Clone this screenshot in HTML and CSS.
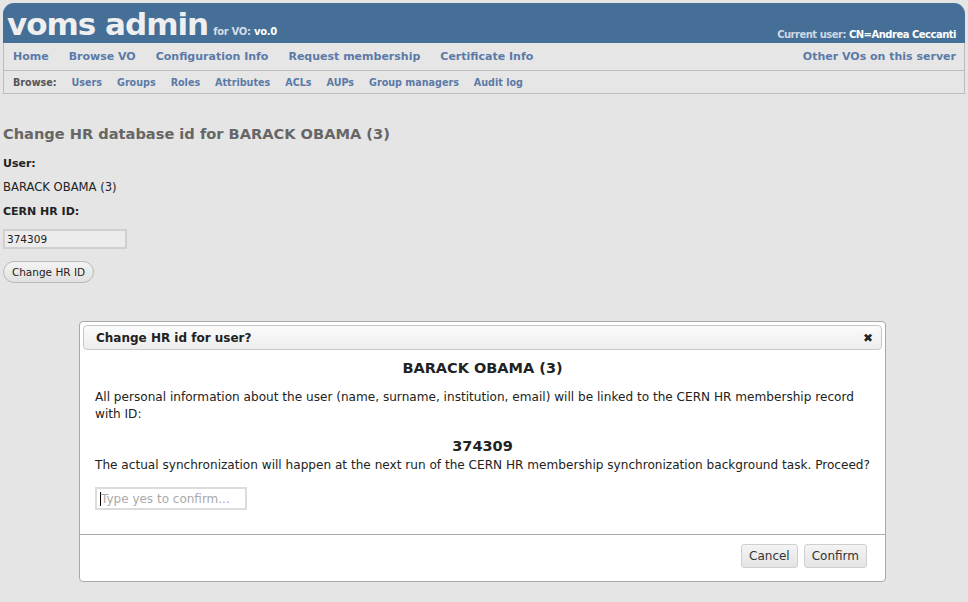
FILE: index.html
```html
<!DOCTYPE html>
<html>
<head>
<meta charset="utf-8">
<link rel="stylesheet" href="styles.css">
</head>
<body>
<div class="header">
  <div class="brand"><span class="logo">voms admin</span><span class="vo">for VO: <b>vo.0</b></span></div>
  <div class="cuser">Current user: <b>CN=Andrea Ceccanti</b></div>
</div>
<div class="nav">
  <div class="navmain">
    <div class="navleft">
      <a>Home</a><a>Browse VO</a><a>Configuration Info</a><a>Request membership</a><a>Certificate Info</a>
    </div>
    <a>Other VOs on this server</a>
  </div>
  <div class="navsub">
    <span class="lbl">Browse:</span><a>Users</a><a>Groups</a><a>Roles</a><a>Attributes</a><a>ACLs</a><a>AUPs</a><a>Group managers</a><a>Audit log</a>
  </div>
</div>
<div class="content">
  <h2>Change HR database id for BARACK OBAMA (3)</h2>
  <div class="label">User:</div>
  <div class="value">BARACK OBAMA (3)</div>
  <div class="label">CERN HR ID:</div>
  <div class="field"><input class="hrinput" type="text" value="374309"></div>
  <button class="pill">Change HR ID</button>
</div>
<div class="dialog">
  <div class="dtitle"><span>Change HR id for user?</span><span class="close">&#x2716;</span></div>
  <div class="dbody">
    <div class="dname">BARACK OBAMA (3)</div>
    <p class="dp">All personal information about the user (name, surname, institution, email) will be linked to the CERN HR membership record with ID:</p>
    <div class="did">374309</div>
    <p class="dp2">The actual synchronization will happen at the next run of the CERN HR membership synchronization background task. Proceed?</p>
    <div class="confirm"><span class="caret"></span><span class="ph">Type yes to confirm...</span></div>
  </div>
  <div class="dfoot"><button class="dbtn">Cancel</button><button class="dbtn">Confirm</button></div>
</div>
</body>
</html>
```
FILE: styles.css
```css
html, body { margin: 0; padding: 0; }
body {
  background: #e5e5e5;
  font-family: "DejaVu Sans", sans-serif;
  color: #222;
  padding: 3px 3px 0 3px;
}
.header {
  background: #456f97;
  border-radius: 11px 11px 0 0;
  height: 40px;
  display: flex;
  justify-content: space-between;
  align-items: flex-end;
  padding: 0 9px 0 4px;
}
.brand { display: flex; align-items: baseline; }
.logo {
  font-family: "DejaVu Sans", sans-serif;
  font-weight: bold;
  font-size: 31px;
  letter-spacing: -1px;
  color: #efefef;
  line-height: 38px;
}
.vo { font-size: 10px; color: #d3dde8; margin-left: 5px; font-weight: bold; letter-spacing: -0.3px; }
.vo b { color: #fff; }
.cuser { font-size: 10px; color: #cdd8e4; font-weight: bold; letter-spacing: -0.5px; padding-bottom: 3px; }
.cuser b { color: #fff; }
.nav { border: 1px solid #bdbdbd; border-top: none; background: #e6e6e6; }
.navmain {
  display: flex;
  justify-content: space-between;
  align-items: center;
  height: 27px;
  border-bottom: 1px solid #bdbdbd;
  padding: 0 8px 0 9px;
}
.navmain a { color: #5b7aa7; font-weight: bold; font-size: 11px; }
.navleft { display: flex; gap: 20px; }
.navsub { display: flex; align-items: center; height: 22px; padding-left: 9px; gap: 15px; }
.navsub a { color: #5b7aa7; font-weight: bold; font-size: 9.6px; }
.navsub .lbl { color: #555; font-weight: bold; font-size: 9.6px; }
.content { padding-top: 31px; }
h2 { margin: 0 0 15px 0; font-size: 14.6px; color: #666; font-weight: bold; }
.label { font-size: 11px; font-weight: bold; color: #222; margin-bottom: 10px; }
.value { font-size: 11.6px; color: #222; margin-bottom: 11px; }
.field { margin-top: 8px; }
.hrinput {
  width: 124px; height: 20px; box-sizing: border-box;
  border: 2px solid #d0d0d0; background: #ececec;
  font-family: "DejaVu Sans", sans-serif; font-size: 10.5px; padding: 0 2px; color: #222;
}
.pill {
  margin-top: 12px;
  font-family: "DejaVu Sans", sans-serif; font-size: 10.5px; color: #222;
  height: 22px; width: 91px; border-radius: 11px;
  border: 1px solid #b9b9b9; background: linear-gradient(#f4f4f4, #e0e0e0);
  padding: 0;
}
.dialog {
  position: absolute; left: 79px; top: 321px; width: 805px; height: 259px;
  background: #fff; border: 1px solid #a9a9a9; border-radius: 4px;
  font-family: "DejaVu Sans", sans-serif; display: flex; flex-direction: column;
}
.dtitle {
  margin: 3px 3px 0 3px; height: 25px; box-sizing: border-box;
  border: 1px solid #c8c8c8; border-radius: 4px;
  background: linear-gradient(#fbfbfb, #ededed);
  display: flex; justify-content: space-between; align-items: center;
  padding: 0 8px 0 12px; font-weight: bold; font-size: 12px; color: #222;
}
.close { font-size: 12px; }
.dbody { padding: 10px 15px 0 15px; flex: 1; font-size: 12.1px; color: #222; }
.dname { text-align: center; font-weight: bold; font-size: 14.5px; margin-bottom: 13px; }
.dp { margin: 0; line-height: 17px; }
.did { text-align: center; font-weight: bold; font-size: 14.5px; margin-top: 15px; }
.dp2 { margin: 3px 0 0 0; line-height: 17px; }
.confirm {
  margin-top: 13px; width: 152px; height: 23px; box-sizing: border-box;
  border: 2px solid #dcdcdc; display: flex; align-items: center; padding-left: 3px;
  font-size: 12px; color: #aaa;
}
.caret { width: 1px; height: 14px; background: #000; }
.dfoot {
  border-top: 1px solid #aaa; height: 47px; display: flex; justify-content: flex-end;
  align-items: flex-start; gap: 6px; padding: 9px 18px 0 0; box-sizing: border-box;
}
.dbtn {
  font-family: "DejaVu Sans", sans-serif; font-size: 12px; color: #333;
  height: 24px; padding: 0 7px; border: 1px solid #cfcfcf; border-radius: 3px;
  background: linear-gradient(#f4f4f4, #e4e4e4);
}
```
